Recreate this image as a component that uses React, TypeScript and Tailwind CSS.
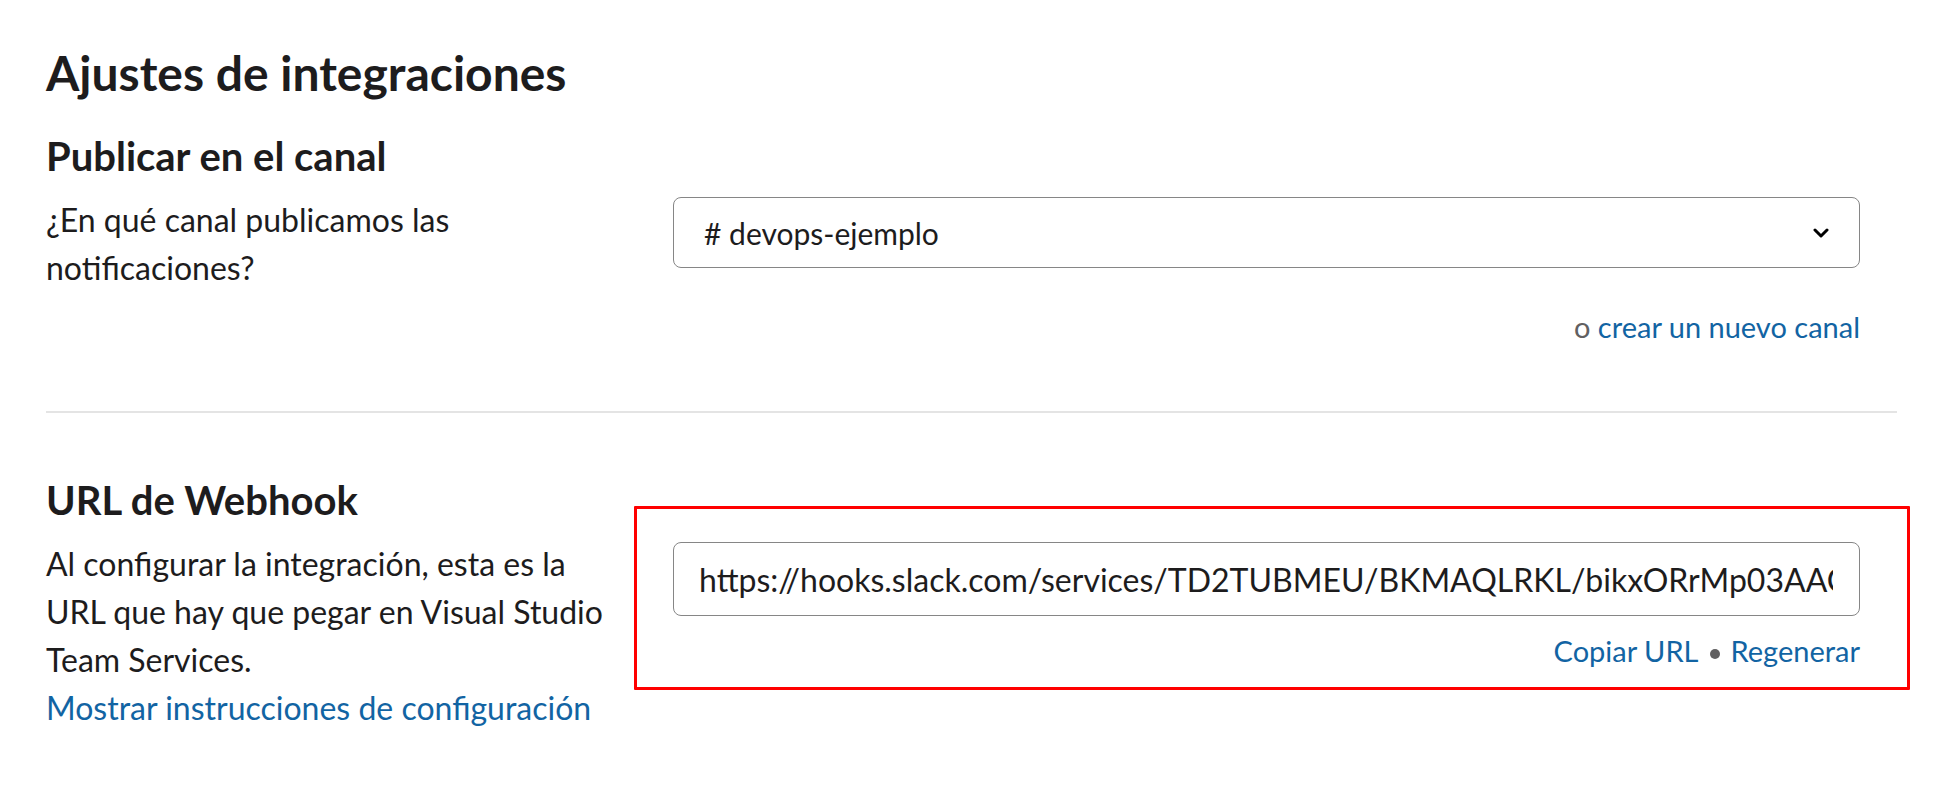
import React from "react";

function Chevron() {
  return (
    <svg width="16" height="10" viewBox="0 0 16 10" className="shrink-0">
      <polyline points="2,2 8,8 14,2" fill="none" stroke="#000" strokeWidth="3" strokeLinecap="round" strokeLinejoin="round" />
    </svg>
  );
}

export default function App() {
  return (
    <div className="min-h-screen bg-white font-['Lato','Noto_Sans',sans-serif] text-[#1d1c1d]">
      <div className="pl-[46px] pr-[47px] pt-[44px]">
        <h1 className="text-[48px] leading-[58px] font-bold">Ajustes de integraciones</h1>

        <section className="mt-[30px]">
          <h2 className="text-[40px] leading-[48px] font-bold">Publicar en el canal</h2>
          <div className="mt-[16px] flex pr-[37px]">
            <p className="w-[568px] shrink-0 text-[32px] leading-[48px]">
              ¿En qué canal publicamos las notificaciones?
            </p>
            <div className="ml-[59px] flex flex-1 flex-col pt-[1px]">
              <div className="flex h-[71px] items-center justify-between rounded-[8px] border border-[#868686] pl-[30px] pr-[30px]">
                <span className="text-[30px] leading-[48px]"># devops-ejemplo</span>
                <Chevron />
              </div>
              <p className="mt-[35px] self-end text-[29px] leading-[48px]">
                <span className="text-[#616061]">o </span>
                <a className="text-[#1264a3]">crear un nuevo canal</a>
              </p>
            </div>
          </div>
        </section>

        <div className="mt-[60px] h-[2px] bg-[#e4e4e4]" />

        <section className="mt-[63px]">
          <h2 className="text-[40px] leading-[48px] font-bold">URL de Webhook</h2>
          <div className="mt-[16px] flex pr-[37px]">
            <div className="w-[568px] shrink-0 text-[32px] leading-[48px]">
              <p>Al configurar la integración, esta es la URL que hay que pegar en Visual Studio Team Services.</p>
              <a className="text-[#1264a3]">Mostrar instrucciones de configuración</a>
            </div>
            <div className="relative ml-[59px] flex flex-1 flex-col pt-[2px]">
              <div className="pointer-events-none absolute left-[-39px] top-[-34px] h-[184px] w-[1276px] rounded-[1px] border-[3px] border-[#ff0000]" />
              <input
                readOnly
                value="https://hooks.slack.com/services/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"
                className="h-[74px] w-full rounded-[8px] border border-[#868686] bg-white pl-[25px] pr-[26px] text-[32px] text-[#1d1c1d] outline-none font-['Lato',sans-serif]"
              />
              <p className="mt-[11px] self-end text-[29px] leading-[48px]">
                <a className="text-[#1264a3]">Copiar URL</a>
                <span aria-hidden="true" className="mx-[11px] inline-block h-[10px] w-[10px] rounded-full bg-[#616061] align-[3px]" />
                <a className="text-[#1264a3]">Regenerar</a>
              </p>
            </div>
          </div>
        </section>
      </div>
    </div>
  );
}
